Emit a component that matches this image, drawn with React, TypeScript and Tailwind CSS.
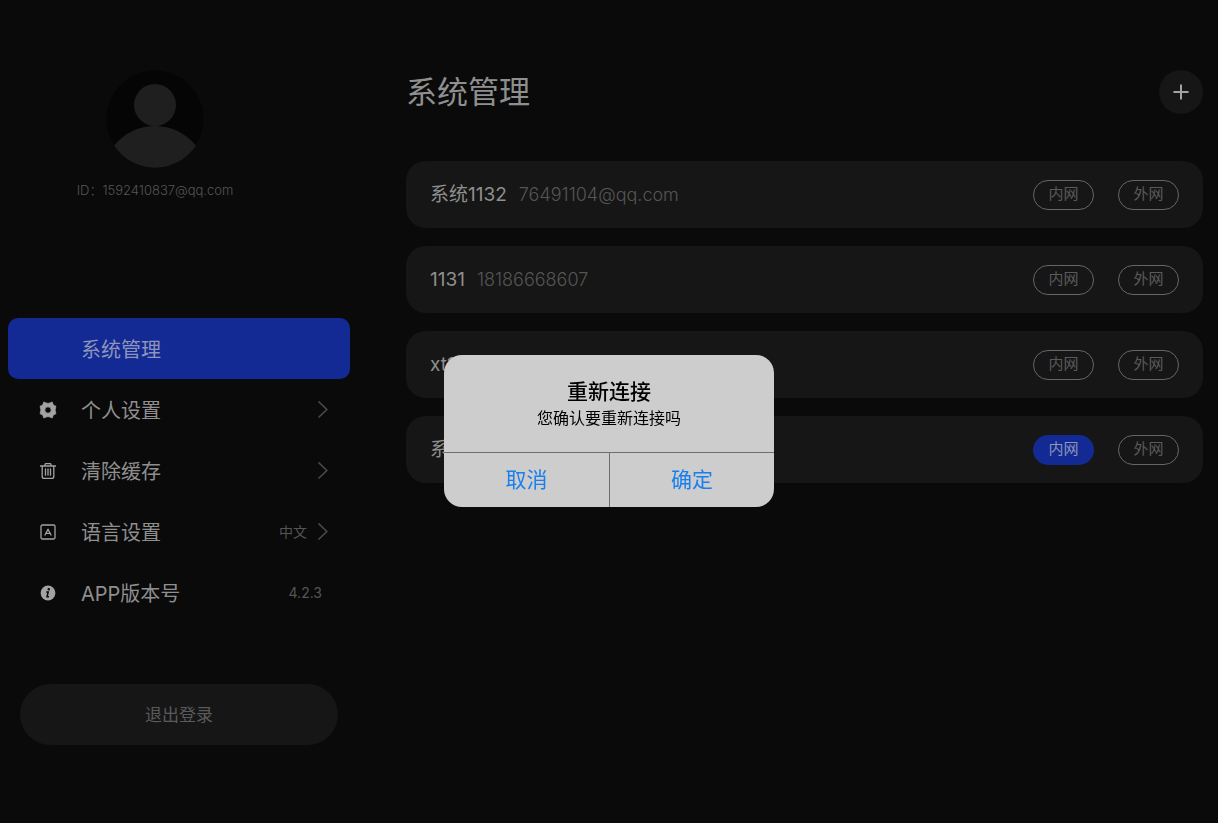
import type { ReactNode } from "react";

type System = {
  name: string;
  account?: string;
  active?: "lan" | "wan";
};

const systems: System[] = [
  { name: "系统1132", account: "76491104@qq.com" },
  { name: "1131", account: "18186668607" },
  { name: "xt1" },
  { name: "系", active: "lan" },
];

function GearIcon() {
  return (
    <svg viewBox="0 0 18 18" className="h-[18px] w-[18px]" fill="currentColor" aria-hidden="true">
      <path
        fillRule="evenodd"
        strokeLinejoin="round"
        stroke="currentColor"
        strokeWidth="0.8"
        d="M4.8 1 L7 2 Q9 2.8 11 2 L13.2 1 L14.2 3.8 Q14.8 4.6 16.9 5.2 Q15.2 9 16.9 12.8 Q14.8 13.4 14.2 14.2 L13.2 17 L11 16 Q9 15.2 7 16 L4.8 17 L3.8 14.2 Q3.2 13.4 1.1 12.8 Q2.8 9 1.1 5.2 Q3.2 4.6 3.8 3.8 Z M9 5.8 A3.2 3.2 0 1 0 9 12.2 A3.2 3.2 0 1 0 9 5.8 Z"
      />
    </svg>
  );
}

function TrashIcon() {
  return (
    <svg viewBox="0 0 18 18" className="h-[18px] w-[18px]" fill="none" stroke="currentColor" strokeWidth="1.3" strokeLinecap="round" strokeLinejoin="round" aria-hidden="true">
      <path d="M1.5 4h15M5.6 4l.8-2.4h5.2l.8 2.4M3.2 4v10.4q0 2 2 2h7.6q2 0 2-2V4M6.5 6.8v6.4M9 6.8v6.4M11.5 6.8v6.4" />
    </svg>
  );
}

function LanguageIcon() {
  return (
    <svg viewBox="0 0 18 18" className="h-[18px] w-[18px]" fill="none" stroke="currentColor" strokeWidth="1.3" strokeLinecap="round" strokeLinejoin="round" aria-hidden="true">
      <rect x="2" y="2" width="14" height="14" rx="1.4" />
      <path d="M6 12 9 6.2l3 5.8M7 10.4h4" />
    </svg>
  );
}

function InfoIcon() {
  return (
    <svg viewBox="0 0 18 18" className="h-[18px] w-[18px]" aria-hidden="true">
      <circle cx="9" cy="9" r="7.4" fill="currentColor" />
      <circle cx="9.8" cy="5.2" r="1.2" fill="#0a0a0a" />
      <path d="M7.2 8h2l-1.2 4.8h2" fill="none" stroke="#0a0a0a" strokeWidth="1.5" />
    </svg>
  );
}

function Chevron() {
  return (
    <svg viewBox="0 0 12 18" className="h-[18px] w-3" fill="none" stroke="#4a4a4a" strokeWidth="1.6" aria-hidden="true">
      <path d="M1.5 0.5 9.8 8.5l-8.3 8" />
    </svg>
  );
}

function NavItem({
  icon,
  label,
  value,
  chevron,
  active,
}: {
  icon?: ReactNode;
  label: string;
  value?: string;
  chevron?: boolean;
  active?: boolean;
}) {
  return (
    <li>
      <button
        type="button"
        className={
          active
            ? "flex h-[61px] w-full items-center rounded-[10px] bg-[#132a94] pr-[21px] pl-[31px] text-[#8d95b8]"
            : "flex h-[61px] w-full items-center rounded-[10px] pr-[21px] pl-[31px] text-[#8f8f8f]"
        }
      >
        <span className="mr-6 h-[18px] w-[18px] text-[#a3a3a3]">{icon}</span>
        <span className="grow pt-0.5 text-left text-[20px]">{label}</span>
        {value && (
          <span className={chevron ? "mr-2.5 text-[14px] text-[#555555]" : "mr-[7px] text-[14px] text-[#555555]"}>
            {value}
          </span>
        )}
        {chevron && <Chevron />}
      </button>
    </li>
  );
}

function NetworkButton({ label, active }: { label: string; active?: boolean }) {
  return (
    <button
      type="button"
      aria-pressed={!!active}
      className={
        active
          ? "flex h-[30px] w-[61px] items-center justify-center rounded-full bg-[#132a94] text-[15px] text-[#8d95b8]"
          : "flex h-[30px] w-[61px] items-center justify-center rounded-full border border-[#666666] text-[15px] text-[#5a5a5a]"
      }
    >
      {label}
    </button>
  );
}

function SystemCard({ system }: { system: System }) {
  return (
    <li className="flex h-[67px] items-center rounded-[20px] bg-[#161616] px-6">
      <span className="pt-0.5 text-[19px] text-[#8f8f8f]">{system.name}</span>
      {system.account && <span className="ml-3 text-[18px] font-light text-[#555555]">{system.account}</span>}
      <div className="ml-auto flex gap-6">
        <NetworkButton label="内网" active={system.active === "lan"} />
        <NetworkButton label="外网" active={system.active === "wan"} />
      </div>
    </li>
  );
}

function ReconnectDialog() {
  return (
    <div className="fixed inset-0 flex items-center justify-center pt-[39px]">
      <div
        role="alertdialog"
        aria-modal="true"
        aria-labelledby="dialog-title"
        aria-describedby="dialog-text"
        className="w-[330px] overflow-hidden rounded-[18px] bg-[#cdcdcd] text-center text-black"
      >
        <div className="px-4 pt-[22px] pb-[23px]">
          <h2 id="dialog-title" className="text-[21px] leading-[30px] font-medium">重新连接</h2>
          <p id="dialog-text" className="text-[16px] leading-[22px]">您确认要重新连接吗</p>
        </div>
        <div className="grid grid-cols-2 border-t border-[#6e6e6e] text-[21px] text-[#1a7fee]">
          <button type="button" className="h-[54px]">取消</button>
          <button type="button" className="h-[54px] border-l border-[#6e6e6e]">确定</button>
        </div>
      </div>
    </div>
  );
}

export default function App() {
  return (
    <div className="flex min-h-screen bg-[#0a0a0a] pr-[15px] pl-2 font-['Inter','Noto_Sans_CJK_SC',sans-serif]">
      <aside className="w-[342px] shrink-0 pt-[70px] pb-12">
        <div className="flex flex-col items-center pr-12">
          <svg viewBox="0 0 98 98" className="h-[98px] w-[98px]" role="img" aria-label="头像">
            <circle cx="49" cy="49" r="48.5" fill="#050505" />
            <circle cx="49" cy="35" r="21" fill="#1f1f1f" />
            <path d="M8 75.5 Q25 56 49 56 T90 75.5 A49 49 0 0 1 8 75.5 Z" fill="#1f1f1f" />
          </svg>
          <p className="mt-3 text-[13px] leading-5 font-light text-[#555555]">ID：1592410837@qq.com</p>
        </div>

        <nav className="mt-[118px]">
          <ul>
            <NavItem label="系统管理" active />
            <NavItem icon={<GearIcon />} label="个人设置" chevron />
            <NavItem icon={<TrashIcon />} label="清除缓存" chevron />
            <NavItem icon={<LanguageIcon />} label="语言设置" value="中文" chevron />
            <NavItem icon={<InfoIcon />} label="APP版本号" value="4.2.3" />
          </ul>
        </nav>

        <div className="mt-[61px] px-3">
          <button type="button" className="h-[61px] w-full rounded-full bg-[#161616] pt-0.5 text-[17px] text-[#5a5a5a]">
            退出登录
          </button>
        </div>
      </aside>

      <main className="ml-14 grow pt-[70px]">
        <header className="mb-[47px] flex h-11 items-center justify-between">
          <h1 className="text-[31px] text-[#8f8f8f]">系统管理</h1>
          <button
            type="button"
            aria-label="添加"
            className="flex h-11 w-11 items-center justify-center rounded-full bg-[#161616] text-[#a3a3a3]"
          >
            <svg viewBox="0 0 16 16" className="h-4 w-4" fill="none" stroke="currentColor" strokeWidth="2" strokeLinecap="round" aria-hidden="true">
              <path d="M8 1.2v13.6M1.2 8h13.6" />
            </svg>
          </button>
        </header>
        <ul className="flex flex-col gap-[18px]">
          {systems.map((system) => (
            <SystemCard key={system.name} system={system} />
          ))}
        </ul>
      </main>

      <ReconnectDialog />
    </div>
  );
}
